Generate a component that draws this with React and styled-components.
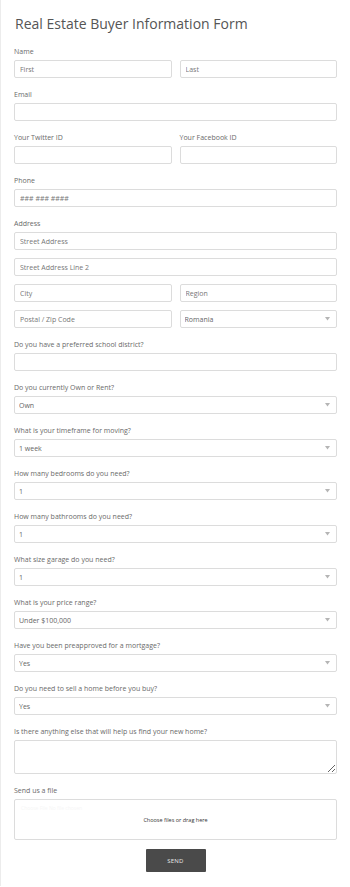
import React from 'react';
import styled, { createGlobalStyle } from 'styled-components';

const GlobalStyle = createGlobalStyle`
    html, body {
        margin: 0;
        padding: 0;
        background: #ffffff;
    }
    body {
        font-family: "Open Sans", "Noto Sans", sans-serif;
        color: #555555;
    }
    * {
        box-sizing: border-box;
    }
`;

const Page = styled.div`
    width: 350px;
    min-height: 884px;
    border-left: 1px solid #ececec;
    padding: 13px 13px 14px 13px;
`;

const Title = styled.h1`
    margin: 0 0 12px 1px;
    font-size: 14px;
    line-height: 22px;
    font-weight: 400;
    color: #555555;
`;

const Field = styled.div`
    margin-bottom: ${(p) => p.$gap || '12px'};
`;

const Label = styled.div`
    font-size: 7px;
    line-height: 10px;
    color: #6a6a6a;
    margin-bottom: 3px;
`;

const Row = styled.div`
    display: grid;
    grid-template-columns: 1fr 1fr;
    gap: 8px;
`;

const Stack = styled.div`
    display: flex;
    flex-direction: column;
    gap: 8px;
`;

const Input = styled.input`
    display: block;
    width: 100%;
    height: 18px;
    border: 1px solid #dcdcdc;
    border-radius: 2px;
    padding: 0 5px;
    font-family: inherit;
    font-size: 7px;
    color: #666666;
    background: #ffffff;
    outline: none;

    &::placeholder {
        color: #777777;
    }
`;

const SelectWrap = styled.div`
    position: relative;
`;

const Select = styled.select`
    display: block;
    width: 100%;
    height: 18px;
    border: 1px solid #dcdcdc;
    border-radius: 2px;
    padding: 0 4px;
    font-family: inherit;
    font-size: 7px;
    color: #666666;
    background: #ffffff;
    appearance: none;
    outline: none;
`;

const Arrow = styled.svg`
    position: absolute;
    right: 7px;
    top: 7px;
    width: 5px;
    height: 4px;
    pointer-events: none;
`;

const TextArea = styled.textarea`
    display: block;
    width: 100%;
    height: 34px;
    border: 1px solid #dcdcdc;
    border-radius: 2px;
    padding: 4px 5px;
    font-family: inherit;
    font-size: 7px;
    resize: vertical;
    outline: none;
`;

const DropZone = styled.div`
    position: relative;
    height: 41px;
    border: 1px solid #dcdcdc;
    border-radius: 2px;
    display: flex;
    align-items: center;
    justify-content: center;
    font-size: 5.5px;
    color: #333333;
`;

const HiddenFile = styled.div`
    position: absolute;
    left: 6px;
    top: 5px;
    font-size: 5px;
    color: #f6f6f6;
`;

const Actions = styled.div`
    display: flex;
    justify-content: center;
`;

const SendButton = styled.button`
    width: 60px;
    height: 23px;
    border: none;
    border-radius: 1px;
    background: #4a4a4a;
    color: #e8e8e8;
    font-family: inherit;
    font-size: 6px;
    letter-spacing: 0.2px;
`;

const Dropdown = ({ value }) => (
    <SelectWrap>
        <Select defaultValue={value}>
            <option>{value}</option>
        </Select>
        <Arrow viewBox="0 0 5 4">
            <path d="M0 0 L5 0 L2.5 3.5 Z" fill="#b5b5b5" />
        </Arrow>
    </SelectWrap>
);

const selects = [
    ['Do you currently Own or Rent?', 'Own'],
    ['What is your timeframe for moving?', '1 week'],
    ['How many bedrooms do you need?', '1'],
    ['How many bathrooms do you need?', '1'],
    ['What size garage do you need?', '1'],
    ['What is your price range?', 'Under $100,000'],
    ['Have you been preapproved for a mortgage?', 'Yes'],
    ['Do you need to sell a home before you buy?', 'Yes'],
];

const App = () => (
    <>
        <GlobalStyle />
        <Page>
            <Title>Real Estate Buyer Information Form</Title>

            <Field>
                <Label>Name</Label>
                <Row>
                    <Input placeholder="First" />
                    <Input placeholder="Last" />
                </Row>
            </Field>

            <Field>
                <Label>Email</Label>
                <Input />
            </Field>

            <Field>
                <Row>
                    <div>
                        <Label>Your Twitter ID</Label>
                        <Input />
                    </div>
                    <div>
                        <Label>Your Facebook ID</Label>
                        <Input />
                    </div>
                </Row>
            </Field>

            <Field>
                <Label>Phone</Label>
                <Input placeholder="### ### ####" />
            </Field>

            <Field>
                <Label>Address</Label>
                <Stack>
                    <Input placeholder="Street Address" />
                    <Input placeholder="Street Address Line 2" />
                    <Row>
                        <Input placeholder="City" />
                        <Input placeholder="Region" />
                    </Row>
                    <Row>
                        <Input placeholder="Postal / Zip Code" />
                        <Dropdown value="Romania" />
                    </Row>
                </Stack>
            </Field>

            <Field>
                <Label>Do you have a preferred school district?</Label>
                <Input />
            </Field>

            {selects.map(([label, value]) => (
                <Field key={label}>
                    <Label>{label}</Label>
                    <Dropdown value={value} />
                </Field>
            ))}

            <Field>
                <Label>Is there anything else that will help us find your new home?</Label>
                <TextArea />
            </Field>

            <Field $gap="9px">
                <Label>Send us a file</Label>
                <DropZone>
                    <HiddenFile>Choose File No file chosen</HiddenFile>
                    Choose files or drag here
                </DropZone>
            </Field>

            <Actions>
                <SendButton>SEND</SendButton>
            </Actions>
        </Page>
    </>
);

export default App;
